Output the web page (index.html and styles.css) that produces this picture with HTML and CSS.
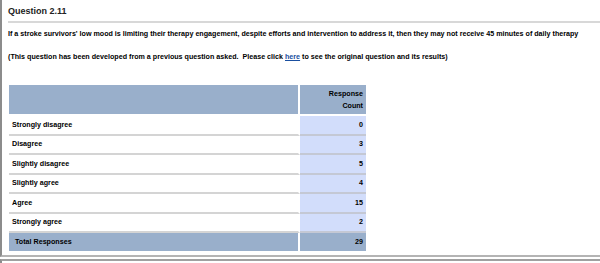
FILE: index.html
```html
<!DOCTYPE html>
<html lang="en">
<head>
<meta charset="UTF-8" />
<title>Question 2.11</title>
<link rel="stylesheet" href="styles.css">
</head>
<body>

<div class="question">
  <h3>Question 2.11</h3>
  <p>If a stroke survivors' low mood is limiting their therapy engagement, despite efforts and intervention to address it, then they may not receive 45 minutes of daily therapy</p>
  <p>(This question has been developed from a previous question asked.&nbsp; Please click <a href="#">here</a> to see the original question and its results)</p>

  <table class="results">
    <tr class="head">
      <th></th>
      <th class="count">Response<br>Count</th>
    </tr>
    <tr><td>Strongly disagree</td><td class="count">0</td></tr>
    <tr><td>Disagree</td><td class="count">3</td></tr>
    <tr><td>Slightly disagree</td><td class="count">5</td></tr>
    <tr><td>Slightly agree</td><td class="count">4</td></tr>
    <tr><td>Agree</td><td class="count">15</td></tr>
    <tr><td>Strongly agree</td><td class="count">2</td></tr>
    <tr class="total"><td>Total Responses</td><td class="count">29</td></tr>
  </table>
</div>

<div class="question next"></div>

</body>
</html>
```
FILE: styles.css
```css
body {
  margin: 0;
  font-family: "Liberation Sans", Arial, sans-serif;
  font-size: 7.15px;
  font-weight: bold;
  color: #000;
  background: #fff;
}
.question {
  border-left: 2px solid #8c8c8c;
  border-bottom: 2px solid #b4b4b4;
  padding: 0 0 4px 6px;
}
.question h3 {
  margin: 0;
  padding: 6px 0 5px 0;
  font-size: 9px;
  color: #222;
  border-bottom: 2px solid #d8d8d8;
}
.question p {
  margin: 6px 0 0 0;
  line-height: 10px;
}
.question p + p {
  margin-top: 13px;
}
.question a {
  color: #1a4fa0;
}
.results {
  margin-top: 23px;
  margin-left: 1px;
  border-collapse: separate;
  border-spacing: 0;
}
.results td,
.results th {
  padding: 0 3px;
  height: 17.5px;
  border-bottom: 2px solid #d4d4d4;
  text-align: left;
}
.results td:first-child {
  width: 280px;
  border-right: 2px solid #fff;
}
.results .count {
  width: 60px;
  text-align: right;
  background: #d2ddfb;
  border-bottom-color: #c4c8d4;
}
.results .head th {
  height: 29px;
  background: #99afcb;
  border-bottom: 2px solid #fff;
  border-right: 2px solid #fff;
  line-height: 12px;
}
.results .head th.count {
  border-right: 0;
}
.results .total td {
  background: #99afcb;
  height: 18px;
  border-bottom: 0;
  padding-left: 6px;
}
.results .total td.count {
  padding-left: 3px;
}
.next {
  border-top: 2px solid #a0a0a0;
  border-bottom: 0;
  margin-top: 2px;
  height: 20px;
}
```
